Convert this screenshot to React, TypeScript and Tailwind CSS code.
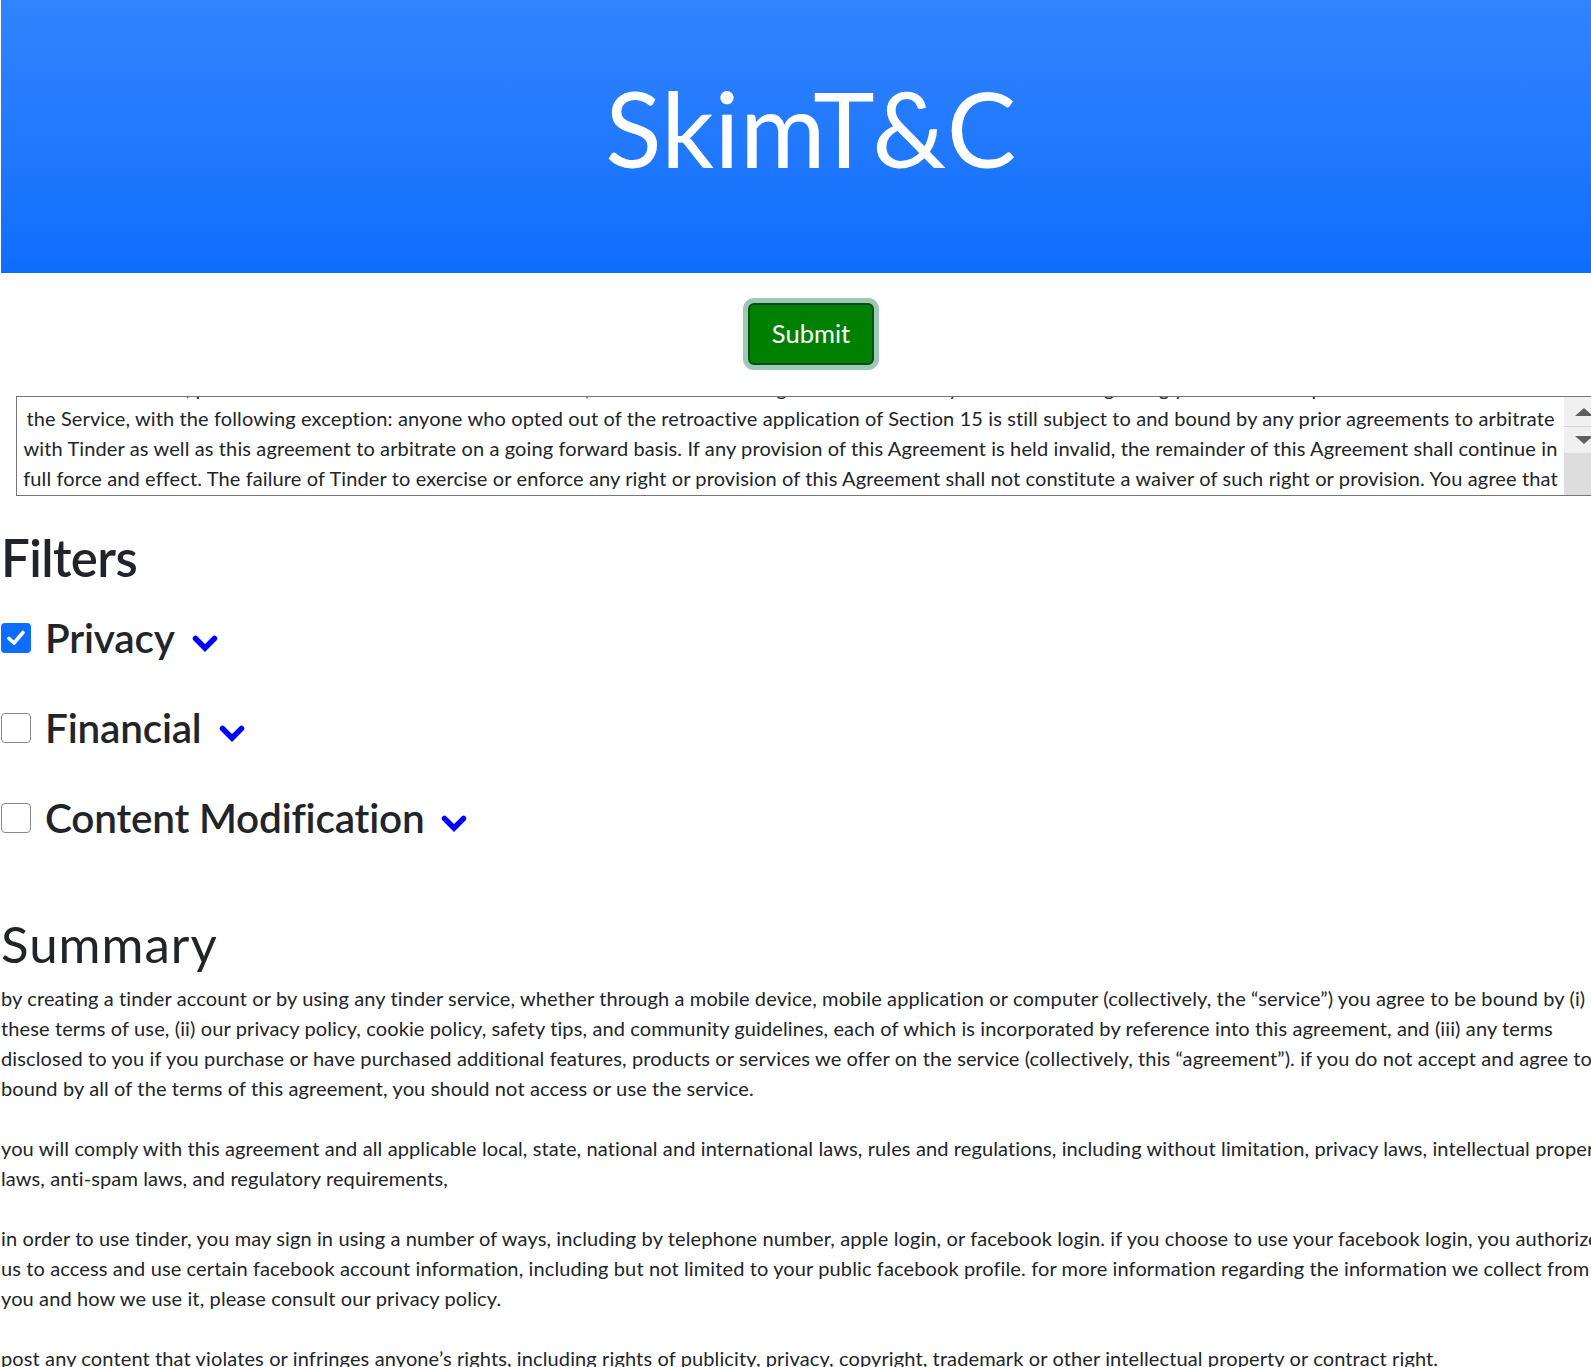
import React from "react";

const FONT = "font-['Segoe_UI',Lato,'Noto_Sans',sans-serif]";

function Chevron() {
  return (
    <svg width="26" height="17" viewBox="0 0 26 17" className="ml-[17px] mt-[12px] shrink-0">
      <polyline
        points="3.5,3.5 13,13 22.5,3.5"
        fill="none"
        stroke="#0000ff"
        strokeWidth="5.5"
        strokeLinecap="round"
        strokeLinejoin="miter"
      />
    </svg>
  );
}

function Checkbox({ checked }: { checked: boolean }) {
  if (checked) {
    return (
      <div className="w-[30px] h-[30px] rounded-[4px] bg-[#0d6efd] flex items-center justify-center shrink-0">
        <svg width="22" height="22" viewBox="0 0 22 22">
          <polyline points="4,11.5 9,16 18,5.5" fill="none" stroke="#ffffff" strokeWidth="3.6" strokeLinecap="round" strokeLinejoin="round" />
        </svg>
      </div>
    );
  }
  return <div className="w-[30px] h-[30px] rounded-[4px] border border-[#8a8a8a] bg-white shrink-0" />;
}

function FilterRow({ label, checked, first }: { label: string; checked: boolean; first?: boolean }) {
  return (
    <div className={`flex items-center ${first ? "mt-[25px]" : "mt-[41px]"}`}>
      <Checkbox checked={checked} />
      <span className="ml-[14px] text-[40.5px] leading-[49px] font-semibold tracking-[-0.2px] text-[#212529] whitespace-nowrap">{label}</span>
      <Chevron />
    </div>
  );
}

const taLines = [
  "additional features, products or services we offer on the Service, contains the entire agreement between you and Tinder regarding your relationship with Tinder and the use of",
  "the Service, with the following exception: anyone who opted out of the retroactive application of Section 15 is still subject to and bound by any prior agreements to arbitrate",
  "with Tinder as well as this agreement to arbitrate on a going forward basis. If any provision of this Agreement is held invalid, the remainder of this Agreement shall continue in",
  "full force and effect. The failure of Tinder to exercise or enforce any right or provision of this Agreement shall not constitute a waiver of such right or provision. You agree that",
  "your Tinder account is non-transferable and all of your rights to your account and its content terminate upon your death.",
];

const summary: string[][] = [
  [
    "by creating a tinder account or by using any tinder service, whether through a mobile device, mobile application or computer (collectively, the \u201cservice\u201d) you agree to be bound by (i)",
    "these terms of use, (ii) our privacy policy, cookie policy, safety tips, and community guidelines, each of which is incorporated by reference into this agreement, and (iii) any terms",
    "disclosed to you if you purchase or have purchased additional features, products or services we offer on the service (collectively, this \u201cagreement\u201d). if you do not accept and agree to be",
    "bound by all of the terms of this agreement, you should not access or use the service.",
  ],
  [
    "you will comply with this agreement and all applicable local, state, national and international laws, rules and regulations, including without limitation, privacy laws, intellectual property",
    "laws, anti-spam laws, and regulatory requirements,",
  ],
  [
    "in order to use tinder, you may sign in using a number of ways, including by telephone number, apple login, or facebook login. if you choose to use your facebook login, you authorize",
    "us to access and use certain facebook account information, including but not limited to your public facebook profile. for more information regarding the information we collect from",
    "you and how we use it, please consult our privacy policy.",
  ],
  [
    "post any content that violates or infringes anyone\u2019s rights, including rights of publicity, privacy, copyright, trademark or other intellectual property or contract right.",
  ],
];

export default function App() {
  return (
    <div className={`w-full min-h-screen overflow-hidden bg-white ${FONT}`}>
      <div className="ml-px w-[1620px] pb-[40px]">
        <header className="h-[273px] bg-[#0d6efd] bg-gradient-to-b from-[#3184fd] to-[#0d6efd] pt-[66px] text-center text-white">
          <h1 className="text-[104px] leading-[1.2] font-normal tracking-[0.5px]">SkimT&amp;C</h1>
        </header>

        <div className="flex justify-center mt-[30px]">
          <button className="h-[62px] px-[22px] rounded-[6px] bg-[#008000] border-2 border-[#0e4a1e] text-white text-[25.5px] leading-none shadow-[0_0_0_5px_#9ccbb4]">
            Submit
          </button>
        </div>

        <div className="mt-[31px] ml-[15px] w-[1589px] h-[100px] border border-[#767676] flex overflow-hidden">
          <div className="flex-1 overflow-hidden px-[2px]">
            <div className="mt-[-24px] text-[20px] leading-[30px] tracking-[0.12px] text-[#212529] text-center">
              {taLines.map((l, i) => (
                <div key={i} className="whitespace-nowrap">{l}</div>
              ))}
            </div>
          </div>
          <div className="w-[40px] shrink-0 flex flex-col bg-[#f0f0f0]">
            <div className="h-[29px] flex items-center justify-center">
              <svg width="20" height="10" viewBox="0 0 20 10"><polygon points="10,1 19,9 1,9" fill="#5f5f5f" /></svg>
            </div>
            <div className="h-px bg-[#d4d4d4]" />
            <div className="h-[26px] flex items-center justify-center">
              <svg width="20" height="10" viewBox="0 0 20 10"><polygon points="1,1 19,1 10,9" fill="#5f5f5f" /></svg>
            </div>
            <div className="flex-1 bg-[#dddddd] relative">
              <svg width="14" height="14" viewBox="0 0 14 14" className="absolute right-0 bottom-0">
                <line x1="3" y1="13" x2="13" y2="3" stroke="#8a8a8a" strokeWidth="1.3" />
                <line x1="8" y1="13" x2="13" y2="8" stroke="#8a8a8a" strokeWidth="1.3" />
              </svg>
            </div>
          </div>
        </div>

        <h1 className="mt-[31px] text-[51px] leading-[61px] font-semibold tracking-[-0.6px] text-[#212529]">Filters</h1>

        <FilterRow label="Privacy" checked first />
        <FilterRow label="Financial" checked={false} />
        <FilterRow label="Content Modification" checked={false} />

        <h1 className="mt-[71px] text-[51px] leading-[61px] font-normal tracking-[1px] text-[#212529]">Summary</h1>

        <div className="mt-[9px] text-[20px] leading-[30px] tracking-[0.12px] text-[#212529]">
          {summary.map((p, i) => (
            <div key={i} className="mb-[30px]">
              {p.map((l, j) => (
                <div key={j} className="whitespace-nowrap">{l}</div>
              ))}
            </div>
          ))}
        </div>
      </div>
    </div>
  );
}
